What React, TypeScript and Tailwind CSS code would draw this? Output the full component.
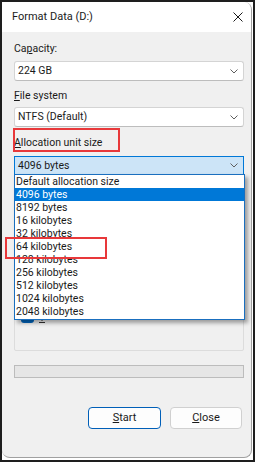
import React from "react";

function Chevron() {
  return (
    <svg width="8" height="5" viewBox="0 0 8 5" className="shrink-0">
      <path d="M0.5 0.5 L4 4 L7.5 0.5" fill="none" stroke="#5f5f5f" strokeWidth="1" />
    </svg>
  );
}

function Combo({ text, selected }: { text: string; selected?: boolean }) {
  return (
    <div
      className={
        selected
          ? "flex items-center justify-between w-[230px] h-[19px] border border-[#0078d7] bg-[#cce4f7] pl-[3px] pr-[5px]"
          : "flex items-center justify-between w-[230px] h-[20px] border border-[#d4d4d4] border-b-[#bdbdbd] rounded-[3px] bg-white pl-[3px] pr-[5px]"
      }
    >
      <span className="leading-[16px]">{text}</span>
      <Chevron />
    </div>
  );
}

export default function App() {
  const items = [
    "Default allocation size",
    "4096 bytes",
    "8192 bytes",
    "16 kilobytes",
    "32 kilobytes",
    "64 kilobytes",
    "128 kilobytes",
    "256 kilobytes",
    "512 kilobytes",
    "1024 kilobytes",
    "2048 kilobytes",
  ];
  return (
    <div className="relative w-[255px] h-[462px] border-2 border-[#1e1e1e] bg-white font-['Roboto',sans-serif] text-[10.5px] text-[#1a1a1a] overflow-hidden">
      <div className="flex flex-col w-[250px] h-[456px] bg-[#f0f0f0] border-r border-b border-[#a0a0a0] rounded-tr-[8px] rounded-b-[8px] overflow-hidden">
        <div className="h-[30px] shrink-0 bg-white flex items-center justify-between pl-[10px] pr-[8px]">
          <span className="leading-[16px] text-[11px]">Format Data (D:)</span>
          <svg width="10" height="10" viewBox="0 0 10 10">
            <path d="M0.5 0.5 L9.5 9.5 M9.5 0.5 L0.5 9.5" stroke="#1a1a1a" strokeWidth="1" fill="none" />
          </svg>
        </div>
        <div className="flex flex-col pl-[12px] pt-[9px]">
          <span className="leading-[16px]">
            Ca<span className="underline">p</span>acity:
          </span>
          <div className="mt-[4px]">
            <Combo text="224 GB" />
          </div>
          <span className="leading-[16px] mt-[7px]">
            <span className="underline">F</span>ile system
          </span>
          <div className="mt-[3px]">
            <Combo text="NTFS (Default)" />
          </div>
          <span className="leading-[16px] mt-[8px]">
            <span className="underline">A</span>llocation unit size
          </span>
          <div className="mt-[5px]">
            <Combo text="4096 bytes" selected />
          </div>
          <div className="mt-[10px] w-[230px] h-[166px] border border-[#dcdcdc] rounded-[2px] flex flex-col justify-end pb-[27px] pl-[6px]">
            <div className="flex items-center gap-[4px]">
              <div className="w-[13px] h-[13px] rounded-[3px] bg-[#0067c0] flex items-center justify-center">
                <svg width="9" height="7" viewBox="0 0 9 7">
                  <path d="M1 3.5 L3.5 6 L8 1" stroke="white" strokeWidth="1.2" fill="none" />
                </svg>
              </div>
              <svg width="8" height="13" viewBox="0 0 8 13">
                <path d="M4 6 L4 11 M1 12.5 L7 12.5" stroke="#333" strokeWidth="1" fill="none" />
              </svg>
            </div>
          </div>
          <div className="mt-[14px] w-[230px] h-[13px] border border-[#bcbcbc] bg-[#e6e6e6]" />
          <div className="mt-[29px] w-[230px] flex justify-end gap-[9px] pr-[2px]">
            <button className="w-[73px] h-[22px] rounded-[4px] border border-[#005fb8] bg-[#fdfdfd] leading-[16px] text-[11px] flex items-center justify-center">
              <span>
                <span className="underline">S</span>tart
              </span>
            </button>
            <button className="w-[72px] h-[22px] rounded-[4px] border border-[#d0d0d0] bg-[#fdfdfd] leading-[16px] text-[11px] flex items-center justify-center">
              <span>
                <span className="underline">C</span>lose
              </span>
            </button>
          </div>
        </div>
      </div>

      <div className="absolute left-[12px] top-[172px] w-[231px] h-[146px] border border-[#1a6fbf] bg-white shadow-[3px_3px_4px_rgba(0,0,0,0.35)] flex flex-col">
        {items.map((it, i) => (
          <div
            key={it}
            className={
              i === 1
                ? "h-[13px] leading-[13px] pl-[1px] bg-[#0078d7] text-white"
                : "h-[13px] leading-[13px] pl-[1px]"
            }
          >
            {it}
          </div>
        ))}
      </div>

      <div className="absolute left-[11px] top-[126px] w-[107px] h-[24px] border-2 border-[#e8383a]" />
      <div className="absolute left-[3px] top-[235px] w-[102px] h-[22px] border-2 border-[#e8383a]" />
    </div>
  );
}
